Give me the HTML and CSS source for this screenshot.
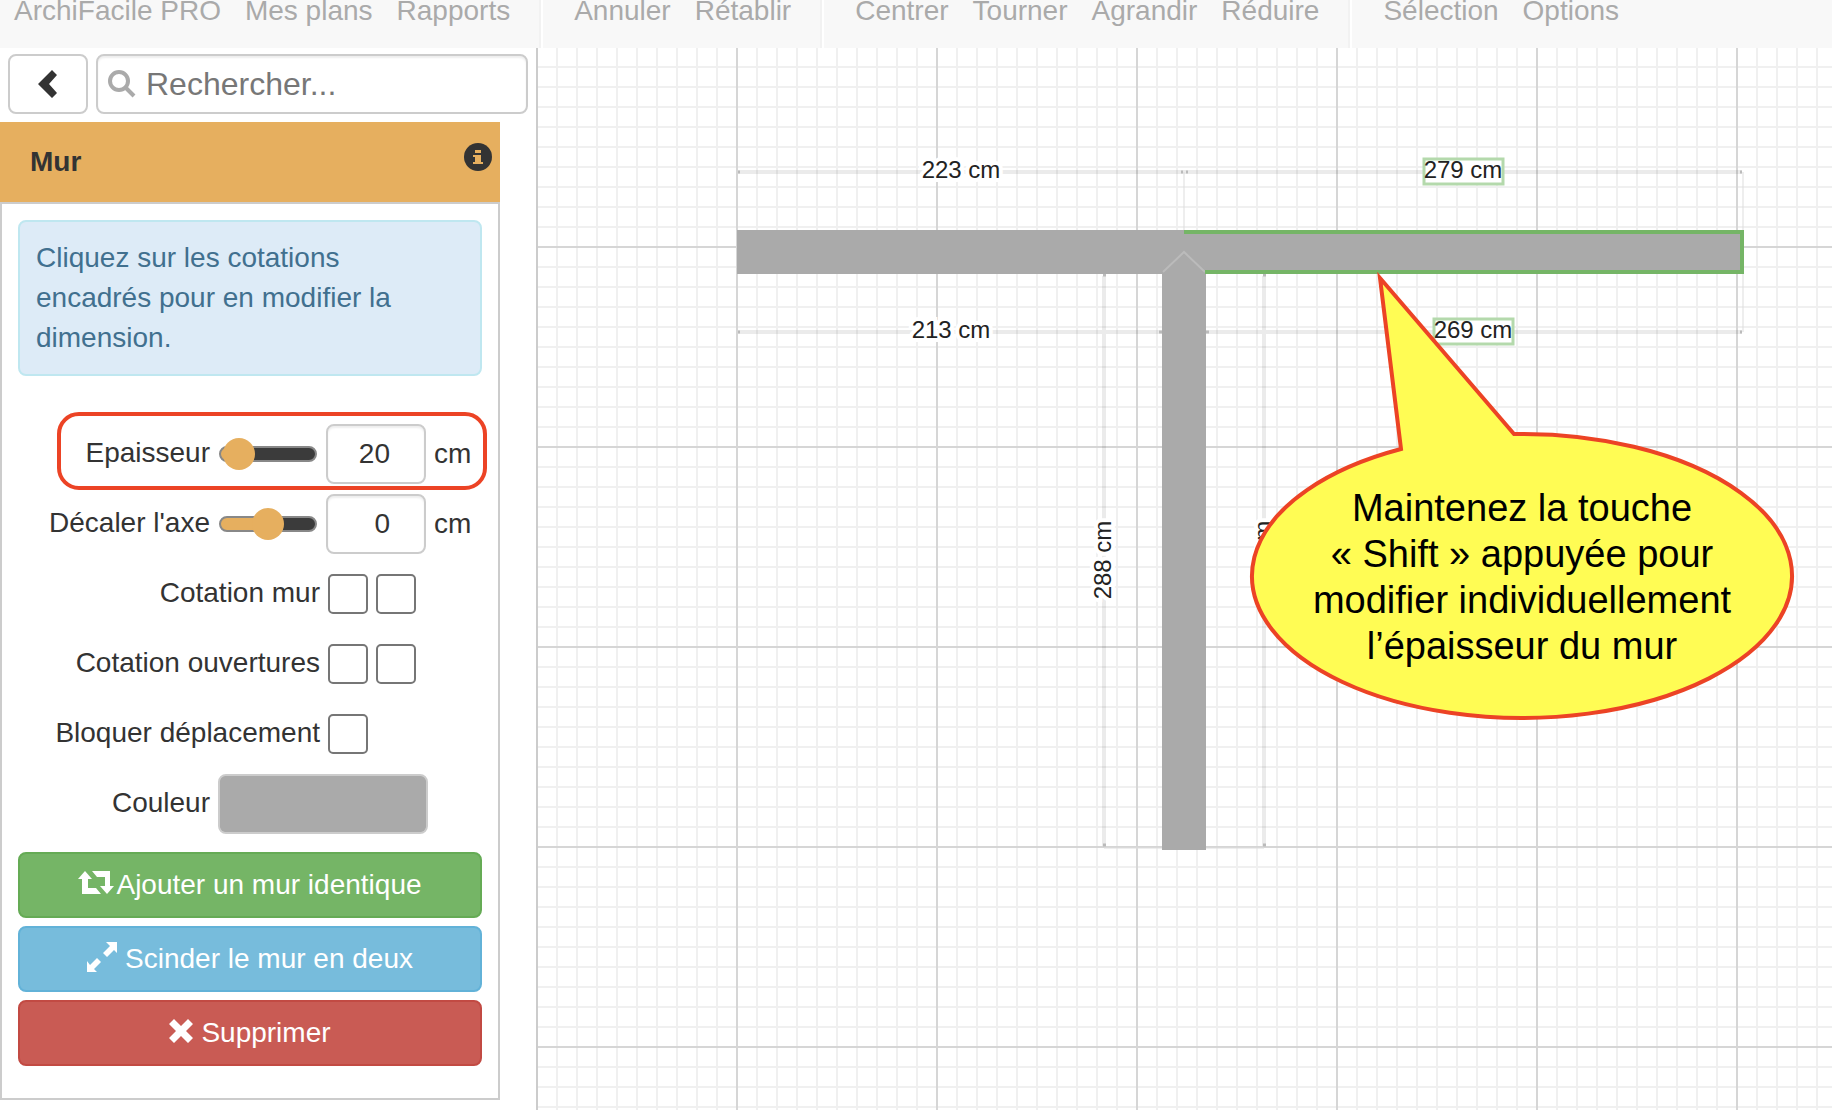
FILE: index.html
```html
<!DOCTYPE html>
<html lang="fr">
<head>
    <meta charset="utf-8" />
    <meta name="viewport" content="width=device-width, initial-scale=1" />
    <title>ArchiFacile</title>
    <link rel="stylesheet" href="styles.css">
</head>
<body>
    <nav class="toolbar">
        <div class="group">
            <a href="#">ArchiFacile PRO</a>
            <a href="#">Mes plans</a>
            <a href="#">Rapports</a>
        </div>
        <div class="group">
            <a href="#">Annuler</a>
            <a href="#">Rétablir</a>
        </div>
        <div class="group">
            <a href="#">Centrer</a>
            <a href="#">Tourner</a>
            <a href="#">Agrandir</a>
            <a href="#">Réduire</a>
        </div>
        <div class="group">
            <a href="#">Sélection</a>
            <a href="#">Options</a>
        </div>
    </nav>

    <div class="main">
        <aside class="sidebar">
            <form class="search">
                <button type="button" class="back" aria-label="Retour">
                    <svg width="20" height="28" viewBox="0 0 20 28"><path d="M14 0 L19 5 L11 14 L19 23 L14 28 L0 14 Z" fill="#333" /></svg>
                </button>
                <label class="searchbox">
                    <svg width="28" height="28" viewBox="0 0 28 28"><circle cx="11" cy="11" r="9" fill="none" stroke="#aaa" stroke-width="4" /><path d="M18 18 L26 26" stroke="#aaa" stroke-width="4" /></svg>
                    <input type="text" placeholder="Rechercher..." aria-label="Rechercher" />
                </label>
            </form>

            <section class="panel">
                <header>
                    <h2>Mur</h2>
                    <button type="button" class="info" aria-label="Aide">
                        <svg width="28" height="28" viewBox="0 0 28 28"><circle cx="14" cy="14" r="14" fill="#333" /><path d="M11 7h6v3h-6z M9 12h8v7h2v2h-10v-2h2v-5h-2z" fill="#e6af5f" /></svg>
                    </button>
                </header>
                <div class="content">
                    <p class="alert">Cliquez sur les cotations encadrés pour en modifier la dimension.</p>

                    <div class="row highlight">
                        <label for="epaisseur">Epaisseur</label>
                        <input type="range" id="epaisseur" class="low" min="0" max="100" value="4" />
                        <input type="text" class="num" value="20" aria-label="Epaisseur en cm" />
                        <span>cm</span>
                    </div>
                    <div class="row">
                        <label for="axe">Décaler l'axe</label>
                        <input type="range" id="axe" class="half" min="-50" max="50" value="0" />
                        <input type="text" class="num" value="0" aria-label="Décalage en cm" />
                        <span>cm</span>
                    </div>
                    <div class="row wide">
                        <label for="cotmur">Cotation mur</label>
                        <input type="checkbox" id="cotmur" />
                        <input type="checkbox" aria-label="Cotation mur, autre côté" />
                    </div>
                    <div class="row wide">
                        <label for="cotouv">Cotation ouvertures</label>
                        <input type="checkbox" id="cotouv" />
                        <input type="checkbox" aria-label="Cotation ouvertures, autre côté" />
                    </div>
                    <div class="row wide">
                        <label for="bloquer">Bloquer déplacement</label>
                        <input type="checkbox" id="bloquer" />
                    </div>
                    <div class="row">
                        <label for="couleur">Couleur</label>
                        <input type="color" id="couleur" value="#aaaaaa" />
                    </div>

                    <div class="actions">
                        <button type="button" class="btn green">
                            <svg width="36" height="24" viewBox="0 0 36 24"><path d="M7 0 L14 8 H10 V17 H18 L23 23 H4 V8 H0 Z M14 0 H32 V15 H36 L29 23 L22 15 H27 V6 H19 Z" fill="#fff" /></svg>
                            Ajouter un mur identique
                        </button>
                        <button type="button" class="btn blue spaced">
                            <svg width="30" height="30" viewBox="0 0 30 30"><path d="M19 0 H30 V11 L27 8 L20 15 L16 11 L23 4 Z M10 16 L14 20 L7 27 L10 30 H0 V19 L3 23 Z" fill="#fff" /></svg>
                            Scinder le mur en deux
                        </button>
                        <button type="button" class="btn red spaced">
                            <svg width="24" height="24" viewBox="0 0 24 24"><path d="M5 0 L12 7 L19 0 L24 5 L17 12 L24 19 L19 24 L12 17 L5 24 L0 19 L7 12 L0 5 Z" fill="#fff" /></svg>
                            Supprimer
                        </button>
                    </div>
                </div>
            </section>
        </aside>

        <main class="plan">
            <svg class="drawing">
                <!-- cotations -->
                <g class="dim">
                    <path d="M200 124 H1204 M200 284 H1204 M566 228 V798 M726 228 V798" />
                </g>
                <g class="ext">
                    <path d="M646 124 V182 M1205 124 V284 M566 800 H726" />
                </g>
                <g class="ends">
                    <path d="M200 124h2 M643 124h2 M648 124h2 M1202 124h2 M200 284h2 M621 284h3 M668 284h3 M1202 284h2 M565 227h3 M725 227h3 M565 797h3 M725 797h3" />
                </g>

                <!-- murs -->
                <path class="wall" d="M199 182 H1205 V226 H668 V802 H624 V226 H199 Z" />
                <path class="joint" d="M625 224 L646 204 L667 224" />
                <path class="selected" d="M646 184 H1204 V224 H667" />

                <g class="cote">
                    <text x="423" y="130">223 cm</text>
                    <text x="413" y="290">213 cm</text>
                    <rect x="886" y="111" width="79" height="25" />
                    <text x="925" y="130">279 cm</text>
                    <rect x="896" y="271" width="79" height="25" />
                    <text x="935" y="290">269 cm</text>
                    <text transform="translate(573 512) rotate(-90)">288 cm</text>
                    <text transform="translate(733 512) rotate(-90)">288 cm</text>
                </g>

                <!-- bulle -->
                <path class="bubble" d="M863 401 L842 230 L976 386 A270 142 0 1 1 863 401 Z" />
                <g class="bubbletext">
                    <text x="984" y="473">Maintenez la touche</text>
                    <text x="984" y="519">« Shift » appuyée pour</text>
                    <text x="984" y="565">modifier individuellement</text>
                    <text x="984" y="611">l’épaisseur du mur</text>
                </g>
            </svg>
        </main>
    </div>
</body>
</html>
```

FILE: styles.css
```css
*, *::before{
    box-sizing:border-box;
}
body{
    margin:0;
    min-height:100vh;
    display:flex;
    flex-direction:column;
    font:28px/40px "Liberation Sans", Arial, sans-serif;
    color:#333;
    background:#fff;
}
input,button{
    font:inherit;
    color:inherit;
    margin:0;
}
svg{
    flex:none;
}

/* menu */
.toolbar{
    display:flex;
    height:48px;
    background:#f8f8f8;
    line-height:22px;
}
.group{
    display:flex;
    gap:24px;
    padding:0 31px;
    border-left:2px solid #fff;
    box-shadow:-2px 0 #f2f2f2;
    white-space:nowrap;
}
.group:first-child{
    padding-left:14px;
    border:0;
}
.toolbar a{
    color:#aaa;
    text-decoration:none;
}

.main{
    display:flex;
    flex:1;
}
.sidebar{
    flex:none;
    width:538px;
    border-right:2px solid #ccc;
}
.search{
    display:flex;
    gap:8px;
    padding:6px 8px 8px;
}
.back{
    flex:none;
    display:flex;
    align-items:center;
    justify-content:center;
    width:80px;
    height:60px;
    border:2px solid #ccc;
    border-radius:8px;
    background:#fff;
}
.searchbox{
    display:flex;
    align-items:center;
    gap:10px;
    flex:1;
    min-width:0;
    height:60px;
    padding:0 10px;
    border:2px solid #ccc;
    border-radius:8px;
    box-shadow:inset 0 2px 2px #eee;
    font-size:32px;
}
.searchbox input{
    flex:1;
    min-width:0;
    padding:0;
    border:0;
    outline:0;
    background:none;
}
.searchbox input::placeholder{
    color:#777;
    opacity:1;
}

/* panneau mur */
.panel{
    width:500px;
}
.panel header{
    display:flex;
    align-items:center;
    justify-content:space-between;
    height:80px;
    padding:0 8px 0 30px;
    background:#e6af5f;
}
.panel h2{
    margin:0;
    font-size:28px;
}
.info{
    display:flex;
    padding:0 0 10px;
    border:0;
    background:none;
}
.content{
    padding:16px 16px 32px;
    border:2px solid #ccc;
}
.alert{
    margin:0 0 43px;
    padding:16px 70px 16px 16px;
    border:2px solid #bfe7f0;
    border-radius:8px;
    background:#ddebf7;
    color:#41708f;
}
.row{
    display:flex;
    align-items:center;
    gap:8px;
    height:70px;
}
.row label{
    width:192px;
    text-align:right;
    white-space:nowrap;
    padding-bottom:2px;
}
.row.wide label{
    width:302px;
}
/* cadre rouge autour de la ligne */
.highlight{
    position:relative;
}
.highlight::before{
    content:"";
    position:absolute;
    left:39px;
    right:-5px;
    top:-7px;
    height:78px;
    border:4px solid #ec4325;
    border-radius:22px;
    pointer-events:none;
}
input[type=range]{
    -webkit-appearance:none;
    appearance:none;
    width:98px;
    height:32px;
    margin:0 1px;
    background:none;
}
input[type=range]::-webkit-slider-runnable-track{
    height:16px;
    border:2px solid #888;
    border-radius:8px;
    background:#3b3b3b;
}
input[type=range].low::-webkit-slider-runnable-track{
    background:linear-gradient(90deg, #e6af5f 16%, #3b3b3b 16%);
}
input[type=range].half::-webkit-slider-runnable-track{
    background:linear-gradient(90deg, #e6af5f 50%, #3b3b3b 50%);
}
input[type=range]::-webkit-slider-thumb{
    -webkit-appearance:none;
    width:32px;
    height:32px;
    margin-top:-10px;
    border-radius:50%;
    background:#e6af5f;
}
.num{
    width:100px;
    height:60px;
    padding:0 34px 0 8px;
    border:2px solid #ccc;
    border-radius:8px;
    box-shadow:inset 0 2px 2px #eee;
    text-align:right;
}
input[type=checkbox]{
    -webkit-appearance:none;
    appearance:none;
    width:40px;
    height:40px;
    border:2px solid #767676;
    border-radius:5px;
    background:#fff;
}
input[type=color]{
    -webkit-appearance:none;
    appearance:none;
    width:210px;
    height:60px;
    padding:0;
    border:2px solid #ccc;
    border-radius:8px;
    background:#aaa;
}
input[type=color]::-webkit-color-swatch-wrapper{
    padding:0;
}
input[type=color]::-webkit-color-swatch{
    border:0;
    border-radius:6px;
}
.actions{
    display:flex;
    flex-direction:column;
    gap:8px;
    margin-top:13px;
}
.btn{
    display:flex;
    align-items:center;
    justify-content:center;
    gap:2px;
    height:66px;
    border:2px solid;
    border-radius:8px;
    color:#fff;
}
.spaced{
    gap:8px;
}
.btn svg{
    margin-bottom:4px;
}
.green{
    background:#75b566;
    border-color:#65ab55;
}
.blue{
    background:#77bcdc;
    border-color:#62b2d8;
}
.red{
    background:#c95b54;
    border-color:#c24a43;
}

/* plan */
.plan{
    flex:1;
    display:flex;
    min-width:0;
    background-color:#fff;
    background-image:
        linear-gradient(#d6d6d6 2px, transparent 2px),
        linear-gradient(90deg, #d6d6d6 2px, transparent 2px),
        linear-gradient(#f0f0f0 2px, transparent 2px),
        linear-gradient(90deg, #f0f0f0 2px, transparent 2px);
    background-size:200px 200px, 200px 200px, 20px 20px, 20px 20px;
    background-position:-2px -2px;
}
.drawing{
    flex:1;
    min-width:0;
}
.dim path{
    fill:none;
    stroke:#000;
    stroke-opacity:0.08;
    stroke-width:4;
}
.ext path{
    fill:none;
    stroke:#ddd;
    stroke-width:1;
}
.ends path{
    fill:none;
    stroke:#bbb;
    stroke-width:3;
}
.wall{
    fill:#aaa;
}
.joint{
    fill:none;
    stroke:#bbb;
    stroke-width:2;
}
.selected{
    fill:none;
    stroke:#75b566;
    stroke-width:4;
}
.cote text{
    font-size:24px;
    text-anchor:middle;
    fill:#222;
    stroke:#fff;
    stroke-width:8;
    paint-order:stroke;
}
.cote rect{
    fill:#fff;
    stroke:#b4d9ac;
    stroke-width:3;
}
.cote rect + text{
    stroke:none;
}
.bubble{
    fill:#fffc54;
    stroke:#ec4325;
    stroke-width:4;
    stroke-miterlimit:10;
}
.bubbletext{
    font-size:38px;
    text-anchor:middle;
    fill:#000;
}
```
